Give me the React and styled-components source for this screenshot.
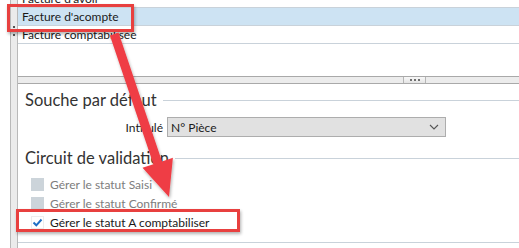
import React from "react";
import styled, { createGlobalStyle } from "styled-components";

const GlobalStyle = createGlobalStyle`
  html, body {
    margin: 0;
    padding: 0;
    background: #ffffff;
  }
  body {
    font-family: Lato, "Noto Sans", sans-serif;
    font-size: 12px;
    color: #1a1a1a;
  }
`;

const Screen = styled.div`
  position: relative;
  width: 519px;
  height: 248px;
  overflow: hidden;
  background: #ffffff;
  display: flex;
  padding-left: 10px;
  box-sizing: border-box;
`;

const Gutter = styled.div`
  width: 6px;
  height: 242px;
  background: #ebebeb;
  border-left: 1px solid #b9b9b9;
  border-right: 1px solid #b9b9b9;
  display: flex;
  flex-direction: column;
  align-items: center;
  padding-top: 26px;
  gap: 6px;
  box-sizing: content-box;
`;

const Dot = styled.span`
  width: 2px;
  height: 2px;
  background: #555;
`;

const Content = styled.div`
  flex: 1;
  display: flex;
  flex-direction: column;
  height: 242px;
  border-bottom: 1px solid #c9d2da;
`;

const List = styled.div`
  height: 76px;
  overflow: hidden;
`;

const Rows = styled.div`
  margin-top: -10px;
`;

const Row = styled.div`
  height: 17px;
  line-height: 17px;
  padding-left: 4px;
  border-bottom: 1px solid #c9d2da;
  background: ${(p) => (p.$selected ? "#cde3f3" : "transparent")};
  white-space: nowrap;
`;

const Splitter = styled.div`
  height: 6px;
  background: #ececec;
  border-top: 1px solid #a9a9a9;
  border-bottom: 1px solid #a9a9a9;
  display: flex;
  padding-left: 385px;
`;

const Grip = styled.div`
  width: 21px;
  height: 6px;
  background: linear-gradient(#f8f8f8, #e4e4e4);
  border-left: 1px solid #b5b5b5;
  border-right: 1px solid #b5b5b5;
  display: flex;
  align-items: center;
  justify-content: center;
  gap: 2px;
`;

const GripDot = styled.span`
  width: 2px;
  height: 2px;
  background: #707070;
`;

const Panel = styled.div`
  flex: 1;
  padding: 6px 0 0 7px;
  display: flex;
  flex-direction: column;
`;

const SectionTitle = styled.div`
  display: flex;
  align-items: center;
  height: 20px;
  font-size: 16.5px;
  color: #333333;
  margin-top: ${(p) => p.$top || 0}px;
  white-space: nowrap;

  &::after {
    content: "";
    flex: 1;
    height: 1px;
    background: #c9d2da;
    margin-left: 6px;
  }
`;

const Field = styled.div`
  display: flex;
  align-items: center;
  margin-top: 7px;
  height: 20px;
`;

const Label = styled.div`
  width: 138px;
  text-align: right;
  margin-right: 4px;
`;

const Select = styled.div`
  width: 268px;
  height: 18px;
  border: 1px solid #adadad;
  background: #e1e1e1;
  display: flex;
  align-items: center;
  justify-content: space-between;
  padding: 0 6px 0 3px;
`;

const Checks = styled.div`
  display: flex;
  flex-direction: column;
  margin-top: 7px;
  padding-left: 6px;
`;

const CheckRow = styled.div`
  height: 19px;
  display: flex;
  align-items: center;
  gap: 6px;
  color: ${(p) => (p.$disabled ? "#7d7d7d" : "#1a1a1a")};
`;

const Box = styled.span`
  width: 13px;
  height: 13px;
  box-sizing: border-box;
  background: ${(p) => (p.$disabled ? "#ccd4da" : "#ffffff")};
  border: 1px solid ${(p) => (p.$disabled ? "#ccd4da" : "#ededed")};
  display: flex;
  align-items: center;
  justify-content: center;
`;

const Highlight = styled.div`
  position: absolute;
  left: ${(p) => p.$x}px;
  top: ${(p) => p.$y}px;
  width: ${(p) => p.$w}px;
  height: ${(p) => p.$h}px;
  border: 3px solid #e8403f;
  box-sizing: border-box;
  box-shadow: 1px 2px 3px rgba(0, 0, 0, 0.3);
  pointer-events: none;
`;

const Overlay = styled.svg`
  position: absolute;
  left: 0;
  top: 0;
  pointer-events: none;
`;

const Chevron = () => (
  <svg width="10" height="6" viewBox="0 0 10 6">
    <path d="M1 1 L5 5 L9 1" fill="none" stroke="#555" strokeWidth="1.1" />
  </svg>
);

const Tick = () => (
  <svg width="11" height="11" viewBox="0 0 11 11">
    <path d="M1.5 5.5 L4.3 8.3 L9.5 2.5" fill="none" stroke="#1f6fc5" strokeWidth="2" />
  </svg>
);

const Arrow = () => (
  <Overlay width="519" height="248">
    <defs>
      <filter id="sh" x="-20%" y="-20%" width="140%" height="140%">
        <feDropShadow dx="1" dy="2" stdDeviation="1.5" floodColor="#000" floodOpacity="0.3" />
      </filter>
    </defs>
    <polygon
      filter="url(#sh)"
      fill="#ef3e45"
      points="118.5,32.6 109.9,35.4 153.4,164.2 142.5,167.8 169,197 172.9,157.8 162,161.4"
    />
  </Overlay>
);

export default function App() {
  return (
    <>
      <GlobalStyle />
      <Screen>
        <Gutter>
          <Dot />
          <Dot />
        </Gutter>
        <Content>
          <List>
            <Rows>
              <Row>Facture d'avoir</Row>
              <Row $selected>Facture d'acompte</Row>
              <Row>Facture comptabilisée</Row>
            </Rows>
          </List>
          <Splitter>
            <Grip>
              <GripDot />
              <GripDot />
              <GripDot />
            </Grip>
          </Splitter>
          <Panel>
            <SectionTitle>Souche par défaut</SectionTitle>
            <Field>
              <Label>Intitulé</Label>
              <Select>
                <span>N° Pièce</span>
                <Chevron />
              </Select>
            </Field>
            <SectionTitle $top={11}>Circuit de validation</SectionTitle>
            <Checks>
              <CheckRow $disabled>
                <Box $disabled />
                Gérer le statut Saisi
              </CheckRow>
              <CheckRow $disabled>
                <Box $disabled />
                Gérer le statut Confirmé
              </CheckRow>
              <CheckRow>
                <Box>
                  <Tick />
                </Box>
                Gérer le statut A comptabiliser
              </CheckRow>
            </Checks>
          </Panel>
        </Content>
        <Highlight $x={7} $y={4} $w={127} $h={28} />
        <Highlight $x={16} $y={209} $w={224} $h={23} />
        <Arrow />
      </Screen>
    </>
  );
}
